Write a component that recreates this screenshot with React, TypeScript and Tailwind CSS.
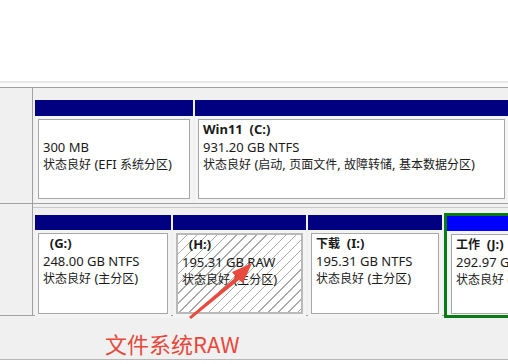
import React from "react";

type Part = {
  w: string;
  label?: string;
  size: string;
  status: string;
  raw?: boolean;
  active?: boolean;
};

const row1: Part[] = [
  { w: "w-[158px]", size: "300 MB", status: "状态良好 (EFI 系统分区)" },
  { w: "flex-1", label: "Win11  (C:)", size: "931.20 GB NTFS", status: "状态良好 (启动, 页面文件, 故障转储, 基本数据分区)" },
];

const row2: Part[] = [
  { w: "w-[136px]", label: "  (G:)", size: "248.00 GB NTFS", status: "状态良好 (主分区)" },
  { w: "w-[133px]", label: "  (H:)", size: "195.31 GB RAW", status: "状态良好 (主分区)", raw: true },
  { w: "w-[134px]", label: "下载  (I:)", size: "195.31 GB NTFS", status: "状态良好 (主分区)" },
  { w: "flex-1", label: "工作  (J:)", size: "292.97 GB NTFS", status: "状态良好 (主分区)", active: true },
];

// CJK glyphs in the reference are a touch smaller than the latin ones
function Mixed({ text }: { text: string }) {
  const parts = text.split(/([\u4e00-\u9fff]+)/);
  return (
    <>
      {parts.map((s, i) =>
        /[\u4e00-\u9fff]/.test(s) ? (
          <span key={i} className="text-[12px]">
            {s}
          </span>
        ) : (
          <span key={i}>{s}</span>
        )
      )}
    </>
  );
}

function Partition({ p, top }: { p: Part; top: boolean }) {
  const box = p.raw
    ? "border-2 border-[#b9b9b9] bg-[repeating-linear-gradient(135deg,#ffffff_0px,#ffffff_6px,#a9a9a9_6px,#a9a9a9_7px)]"
    : "border border-[#a7a7a7] bg-white";
  return (
    <div
      className={`${p.w} shrink-0 flex flex-col ${
        p.active ? "border-[3px] border-[#0a7a12] -mt-[2px] h-[105px]" : "h-[103px]"
      }`}
    >
      <div className={`${top ? "h-[16px]" : "h-[15px]"} ${p.active ? "bg-[#0000ff]" : "bg-[#000080]"}`} />
      <div className={`flex-1 ${p.active ? "px-[4px] pt-[3px] pb-[1px]" : "px-[3px] pt-[3px] pb-[4px]"} bg-[#f4f4f4]`}>
        <div className={`h-full ${box} pl-[4px] pt-[1px] text-[13px] leading-[17.5px] text-[#1a1a1a] whitespace-pre`}>
          <div className="font-bold h-[17.5px]">
            <Mixed text={p.label ?? ""} />
          </div>
          <div>{p.size}</div>
          <div>
            <Mixed text={p.status} />
          </div>
        </div>
      </div>
    </div>
  );
}

export default function App() {
  return (
    <div
      className="relative w-[508px] h-[364px] overflow-hidden bg-white"
      style={{ fontFamily: '"Noto Sans", "Noto Sans CJK SC", sans-serif' }}
    >
      <div className="h-[81px] bg-white" />
      <div className="h-[7px] border-t-2 border-[#e6e6e6] bg-[#fafafa] border-b border-b-[#a0a0a0]" />

      <div className="flex h-[116px] border-b border-[#a0a0a0] bg-[#f0f0f0]">
        <div className="w-[33px] shrink-0 border-r border-[#a0a0a0] bg-[#f0f0f0]" />
        <div className="flex-1 flex gap-[2px] pl-[2px] pt-[12px]">
          {row1.map((p, i) => (
            <Partition key={i} p={p} top />
          ))}
        </div>
      </div>

      <div className="flex h-[112px] border-b border-[#a0a0a0] bg-[#f0f0f0]">
        <div className="w-[33px] shrink-0 border-r border-[#a0a0a0]" />
        <div className="flex-1 flex gap-[2px] pl-[2px] pt-[7px] border-t border-[#c8c8c8] mt-[3px]">
          {row2.map((p, i) => (
            <Partition key={i} p={p} top={false} />
          ))}
        </div>
      </div>

      <div className="h-[44px] bg-[#f0f0f0] border-b border-[#b8b8b8]" />

      <svg className="absolute left-0 top-0" width="508" height="364" viewBox="0 0 508 364">
        <polygon points="189,317 236,277 232,272 252,263 243,283 239,280 191,319" fill="#e84a3d" />
      </svg>
      <div
        className="absolute left-[105px] top-[328px] text-[22px] leading-[30px] text-[#e5493c]"
        style={{ fontFamily: '"Noto Sans CJK SC", sans-serif' }}
      >
        文件系统RAW
      </div>
    </div>
  );
}
